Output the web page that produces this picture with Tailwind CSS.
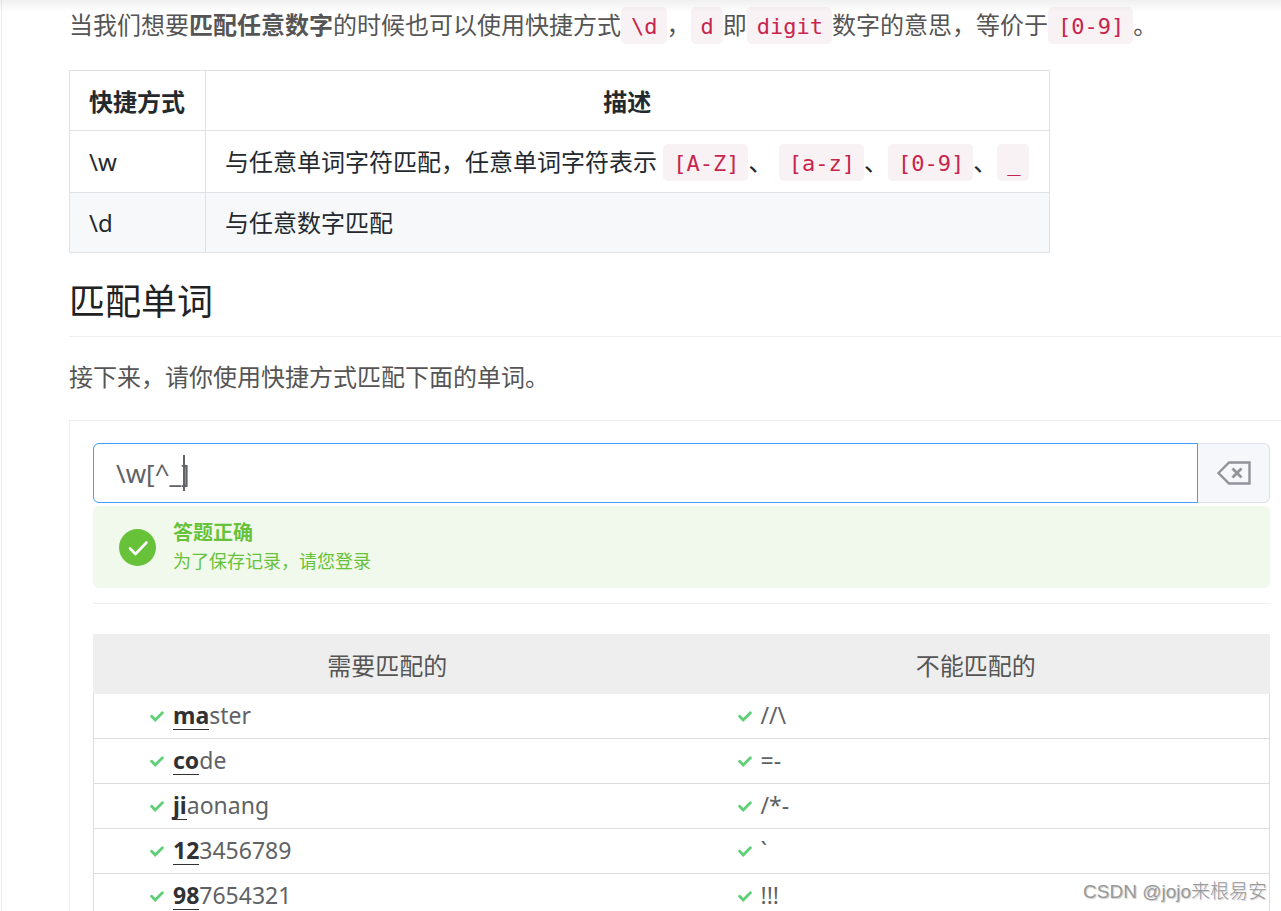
<!DOCTYPE html>
<html lang="zh-CN">
<head>
<meta charset="utf-8">
<meta name="viewport" content="width=device-width, initial-scale=1">
<title>匹配单词</title>
<script src="https://cdn.jsdelivr.net/npm/@tailwindcss/browser@4"></script>
</head>
<body class="relative h-screen overflow-hidden bg-white pl-px font-['Noto_Sans','Noto_Sans_CJK_SC',sans-serif] text-2xl text-[#555]">
<svg class="hidden" aria-hidden="true">
  <symbol id="tick" viewBox="0 0 14 12"><path d="M1.6 6.2 5.2 10 12.4 2.8" fill="none" stroke="#5fd077" stroke-width="2.8" stroke-linecap="round" stroke-linejoin="miter"/></symbol>
</svg>
<div class="absolute inset-x-0 top-0 h-3 bg-linear-to-b from-black/6 to-transparent"></div>
<main class="min-h-full border-l border-[#eee] pl-[67px]">
  <p class="pt-[7px] leading-9 whitespace-nowrap">当我们想要<strong class="font-bold">匹配任意数字</strong>的时候也可以使用快捷方式<code class="rounded-[5px] bg-[#f9f2f4] pt-[7px] pr-[9px] pb-[5px] pl-[10px] font-['DejaVu_Sans_Mono',monospace] text-[22px] leading-none text-[#c7254e]">\d</code>，<code class="rounded-[5px] bg-[#f9f2f4] pt-[7px] pr-[9px] pb-[5px] pl-[10px] font-['DejaVu_Sans_Mono',monospace] text-[22px] leading-none text-[#c7254e]">d</code>即<code class="rounded-[5px] bg-[#f9f2f4] pt-[7px] pr-[9px] pb-[5px] pl-[10px] font-['DejaVu_Sans_Mono',monospace] text-[22px] leading-none text-[#c7254e]">digit</code>数字的意思，等价于<code class="rounded-[5px] bg-[#f9f2f4] pt-[7px] pr-[9px] pb-[5px] pl-[10px] font-['DejaVu_Sans_Mono',monospace] text-[22px] leading-none text-[#c7254e]">[0-9]</code>。</p>

  <table class="mt-[27px] border-collapse whitespace-nowrap text-[#24292e]">
    <thead>
      <tr>
        <th class="border border-[#dfe2e5] pt-[13px] pr-5 pb-[11px] pl-[19px] leading-[35px] font-bold">快捷方式</th>
        <th class="border border-[#dfe2e5] pt-[13px] pr-5 pb-[11px] pl-[19px] leading-[35px] font-bold">描述</th>
      </tr>
    </thead>
    <tbody>
      <tr>
        <td class="border border-[#dfe2e5] py-[13px] pr-5 pl-[19px] leading-[35px]">\w</td>
        <td class="border border-[#dfe2e5] py-[13px] pr-5 pl-[19px] leading-[35px]">与任意单词字符匹配，任意单词字符表示 <code class="rounded-[5px] bg-[#f9f2f4] pt-[7px] pr-[9px] pb-[5px] pl-[10px] font-['DejaVu_Sans_Mono',monospace] text-[22px] leading-none text-[#c7254e]">[A-Z]</code>、 <code class="rounded-[5px] bg-[#f9f2f4] pt-[7px] pr-[9px] pb-[5px] pl-[10px] font-['DejaVu_Sans_Mono',monospace] text-[22px] leading-none text-[#c7254e]">[a-z]</code>、<code class="rounded-[5px] bg-[#f9f2f4] pt-[7px] pr-[9px] pb-[5px] pl-[10px] font-['DejaVu_Sans_Mono',monospace] text-[22px] leading-none text-[#c7254e]">[0-9]</code>、<code class="rounded-[5px] bg-[#f9f2f4] pt-[7px] pr-[9px] pb-[5px] pl-[10px] font-['DejaVu_Sans_Mono',monospace] text-[22px] leading-none text-[#c7254e]">_</code></td>
      </tr>
      <tr class="bg-[#f6f8fa]">
        <td class="border border-[#dfe2e5] py-3 pr-5 pl-[19px] leading-[35px]">\d</td>
        <td class="border border-[#dfe2e5] py-3 pr-5 pl-[19px] leading-[35px]">与任意数字匹配</td>
      </tr>
    </tbody>
  </table>

  <h2 class="mt-6 border-b border-[#eee] pb-[9px] text-4xl leading-[50px] text-[#222]">匹配单词</h2>
  <p class="mt-[22px] leading-9">接下来，请你使用快捷方式匹配下面的单词。</p>

  <section class="mt-[25px] border-t border-l border-[#eee] pt-[22px] pr-[11px] pl-[23px]">
    <div class="flex h-[60px]">
      <div class="relative min-w-0 flex-1">
        <input id="regex" type="text" aria-label="正则表达式" value="\w[^_]" class="h-full w-full rounded-l-md border border-[#409eff] bg-white pl-[22px] text-[26px] text-[#606266] outline-none">
        <span class="absolute top-3 left-[90px] h-9 w-0.5 bg-[#606266]"></span>
      </div>
      <button type="button" aria-label="清除" class="flex w-[72px] items-center justify-center rounded-r-md border border-l-0 border-[#dcdfe6] bg-[#f5f7fa]">
        <svg class="h-6 w-[34px]" viewBox="0 0 34 24" fill="none" stroke="#909399"><path d="M1.5 12 12 1.5H32.5V22.5H12Z" stroke-width="2.4"/><path d="M15.5 7.5 24.5 16.5M24.5 7.5 15.5 16.5" stroke-width="2.8"/></svg>
      </button>
    </div>
    <div role="alert" class="mt-[3px] flex h-[82px] items-center gap-[17px] rounded-md bg-[#f0f9eb] pl-[26px] text-[#67c23a]">
      <svg class="size-[37px]" viewBox="0 0 37 37"><circle cx="18.5" cy="18.5" r="18.5" fill="#67c23a"/><path d="M11 19.5 16.5 25 27.5 13.5" fill="none" stroke="#fff" stroke-width="2.6" stroke-linecap="round" stroke-linejoin="round"/></svg>
      <div>
        <strong class="block text-xl leading-7 font-bold">答题正确</strong>
        <p class="text-lg leading-7">为了保存记录，请您登录</p>
      </div>
    </div>
    <hr class="mt-[15px] border-[#eee]">
    <table class="mt-[30px] w-full table-fixed border-separate border-spacing-0 text-[#606266]">
      <thead>
        <tr class="bg-[#eee] text-[#555]">
          <th class="h-[60px] pt-1 font-normal">需要匹配的</th>
          <th class="h-[60px] pt-1 font-normal">不能匹配的</th>
        </tr>
      </thead>
      <tbody class="text-[23px] leading-[42px]">
        <tr>
          <td class="border-b border-l border-[#ddd] pl-14"><div class="flex items-center gap-[9px]"><svg class="h-3 w-3.5"><use href="#tick"/></svg><span class="pb-0.5"><b class="inline-block border-b border-[#303133] leading-[27px] text-[#303133]">ma</b>ster</span></div></td>
          <td class="border-r border-b border-[#ddd] pl-14"><div class="flex items-center gap-[9px]"><svg class="h-3 w-3.5"><use href="#tick"/></svg><span class="pb-0.5">//\</span></div></td>
        </tr>
        <tr>
          <td class="border-b border-l border-[#ddd] pl-14"><div class="flex items-center gap-[9px]"><svg class="h-3 w-3.5"><use href="#tick"/></svg><span class="pb-0.5"><b class="inline-block border-b border-[#303133] leading-[27px] text-[#303133]">co</b>de</span></div></td>
          <td class="border-r border-b border-[#ddd] pl-14"><div class="flex items-center gap-[9px]"><svg class="h-3 w-3.5"><use href="#tick"/></svg><span class="pb-0.5">=-</span></div></td>
        </tr>
        <tr>
          <td class="border-b border-l border-[#ddd] pl-14"><div class="flex items-center gap-[9px]"><svg class="h-3 w-3.5"><use href="#tick"/></svg><span class="pb-0.5"><b class="inline-block border-b border-[#303133] leading-[27px] text-[#303133]">ji</b>aonang</span></div></td>
          <td class="border-r border-b border-[#ddd] pl-14"><div class="flex items-center gap-[9px]"><svg class="h-3 w-3.5"><use href="#tick"/></svg><span class="pb-0.5">/*-</span></div></td>
        </tr>
        <tr>
          <td class="border-b border-l border-[#ddd] pl-14"><div class="flex items-center gap-[9px]"><svg class="h-3 w-3.5"><use href="#tick"/></svg><span class="pb-0.5"><b class="inline-block border-b border-[#303133] leading-[27px] text-[#303133]">12</b>3456789</span></div></td>
          <td class="border-r border-b border-[#ddd] pl-14"><div class="flex items-center gap-[9px]"><svg class="h-3 w-3.5"><use href="#tick"/></svg><span class="pb-0.5">`</span></div></td>
        </tr>
        <tr>
          <td class="border-b border-l border-[#ddd] pl-14"><div class="flex items-center gap-[9px]"><svg class="h-3 w-3.5"><use href="#tick"/></svg><span class="pb-0.5"><b class="inline-block border-b border-[#303133] leading-[27px] text-[#303133]">98</b>7654321</span></div></td>
          <td class="border-r border-b border-[#ddd] pl-14"><div class="flex items-center gap-[9px]"><svg class="h-3 w-3.5"><use href="#tick"/></svg><span class="pb-0.5">!!!</span></div></td>
        </tr>
      </tbody>
    </table>
  </section>
</main>
<p class="absolute right-[14px] bottom-[5px] font-['Liberation_Sans','Noto_Sans_CJK_SC',sans-serif] text-[19px] leading-7 font-light text-[#999] text-shadow-[1px_1px_1px_#ccc]">CSDN @jojo来根易安</p>
</body>
</html>
